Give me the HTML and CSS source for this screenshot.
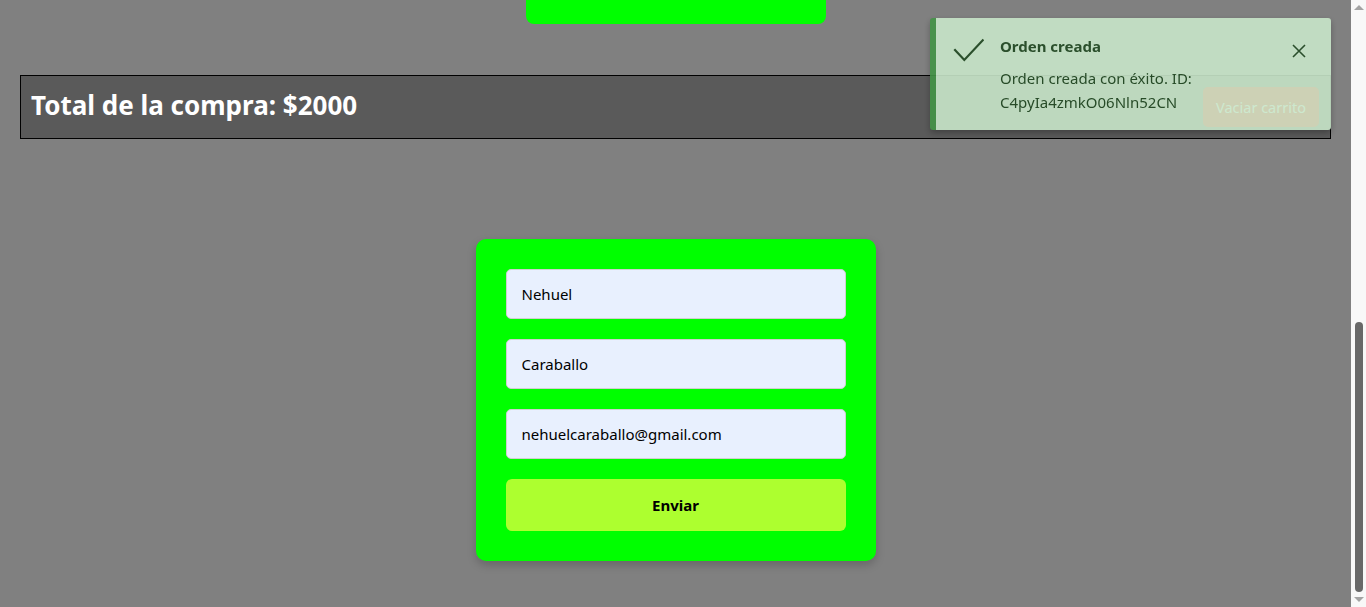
FILE: index.html
```html
<!DOCTYPE html>
<html lang="es">
<head>
<meta charset="utf-8">
<title>Carrito</title>
<link rel="stylesheet" href="styles.css">
</head>
<body>
<div class="window">
  <main class="page">
    <div class="product-card"></div>
    <section class="cart-total">
      <h2 class="cart-total-title">Total de la compra: $2000</h2>
      <button class="btn-clear" type="button">Vaciar carrito</button>
    </section>
    <div class="checkout">
      <form class="checkout-form">
        <input class="field" type="text" value="Nehuel">
        <input class="field" type="text" value="Caraballo">
        <input class="field" type="email" value="nehuelcaraballo@gmail.com">
        <button class="btn-submit" type="button">Enviar</button>
      </form>
    </div>
  </main>
  <div class="scrollbar">
    <div class="sb-arrow"><span class="sb-up"></span></div>
    <div class="sb-track"><div class="sb-thumb"></div></div>
    <div class="sb-arrow"><span class="sb-down"></span></div>
  </div>
</div>

<div class="toast">
  <div class="toast-message">
    <svg class="toast-icon" width="32" height="32" viewBox="0 0 32 32" aria-hidden="true">
      <polyline points="2.3,15.3 12.3,26 31.5,5.5" fill="none" stroke="#224a23" stroke-width="2.2"/>
    </svg>
    <div class="toast-text">
      <div class="toast-summary">Orden creada</div>
      <div class="toast-detail">Orden creada con éxito. ID: C4pyIa4zmkO06Nln52CN</div>
    </div>
    <button class="toast-close" type="button" aria-label="Cerrar">
      <svg width="14" height="14" viewBox="0 0 14 14" aria-hidden="true">
        <path d="M1 1 L13 13 M13 1 L1 13" stroke="#224a23" stroke-width="1.6" fill="none"/>
      </svg>
    </button>
  </div>
</div>
</body>
</html>
```

FILE: styles.css
```css
* { box-sizing: border-box; }

html, body {
  margin: 0;
  height: 607px;
  overflow: hidden;
}

body {
  font-family: "Noto Sans", "Open Sans", sans-serif;
  background: #808080;
}

.window {
  display: flex;
  height: 607px;
}

.page {
  flex: 1;
  display: flex;
  flex-direction: column;
  justify-content: flex-end;
  overflow: hidden;
  padding-bottom: 46px;
}

.product-card {
  flex-shrink: 0;
  width: 300px;
  height: 400px;
  align-self: center;
  background: #00ff00;
  border-radius: 8px;
}

.cart-total {
  flex-shrink: 0;
  margin: 51px 20px 0;
  height: 64px;
  background: #5a5a5a;
  border: 1px solid #000;
  display: flex;
  align-items: center;
  justify-content: space-between;
  padding: 0 11px 0 10px;
}

.cart-total-title {
  margin: 0 0 4px;
  color: #fff;
  font-size: 26px;
  font-weight: 700;
}

.btn-clear {
  height: 40px;
  width: 116px;
  padding: 0;
  border: none;
  border-radius: 5px;
  background: #ff1a00;
  color: #fff;
  font-family: inherit;
  font-size: 14.5px;
}

.checkout {
  flex-shrink: 0;
  display: flex;
  justify-content: center;
  margin-top: 100px;
}

.checkout-form {
  width: 400px;
  padding: 30px;
  background: #00ff00;
  border-radius: 10px;
  box-shadow: 0 4px 10px rgba(0, 0, 0, 0.2);
  display: flex;
  flex-direction: column;
  gap: 20px;
}

.field {
  height: 50px;
  padding: 0 15px;
  border: 1px solid #cfcfcf;
  border-radius: 5px;
  background: #e8f0fe;
  color: #000;
  font-family: inherit;
  font-size: 15px;
}

.btn-submit {
  height: 52px;
  border: none;
  border-radius: 6px;
  background: #adff2f;
  color: #000;
  font-family: inherit;
  font-size: 15px;
  font-weight: 700;
}

.scrollbar {
  width: 15px;
  flex-shrink: 0;
  background: #f8f8f8;
  display: flex;
  flex-direction: column;
}

.sb-arrow {
  height: 15px;
  display: flex;
  align-items: center;
  justify-content: center;
}

.sb-up, .sb-down {
  width: 0;
  height: 0;
  border-left: 5px solid transparent;
  border-right: 5px solid transparent;
}
.sb-up { border-bottom: 5px solid #a3a3a3; }
.sb-down { border-top: 5px solid #a3a3a3; }

.sb-track {
  flex: 1;
  display: flex;
  flex-direction: column;
  justify-content: flex-end;
  align-items: center;
}

.sb-thumb {
  width: 8px;
  height: 270px;
  border-radius: 4px;
  background: #686868;
}

.toast {
  position: fixed;
  top: 18px;
  right: 35px;
  width: 401px;
  opacity: 0.9;
}

.toast-message {
  display: flex;
  align-items: flex-start;
  padding: 16px;
  background: #c8e6c9;
  border-left: 6px solid #439446;
  border-radius: 3px;
  color: #224a23;
  box-shadow: 0 3px 6px rgba(0, 0, 0, 0.3);
  font-family: "Noto Sans", "Open Sans", sans-serif;
  font-size: 15px;
}

.toast-icon {
  flex-shrink: 0;
}

.toast-text {
  flex: 1;
  margin-left: 16px;
}

.toast-summary {
  font-weight: 700;
  line-height: 24px;
}

.toast-detail {
  margin-top: 8px;
  line-height: 24px;
  width: 200px;
}

.toast-close {
  flex-shrink: 0;
  width: 32px;
  height: 32px;
  border: none;
  border-radius: 50%;
  background: transparent;
  display: flex;
  align-items: center;
  justify-content: center;
  padding: 0;
  margin-top: 1px;
}
```
